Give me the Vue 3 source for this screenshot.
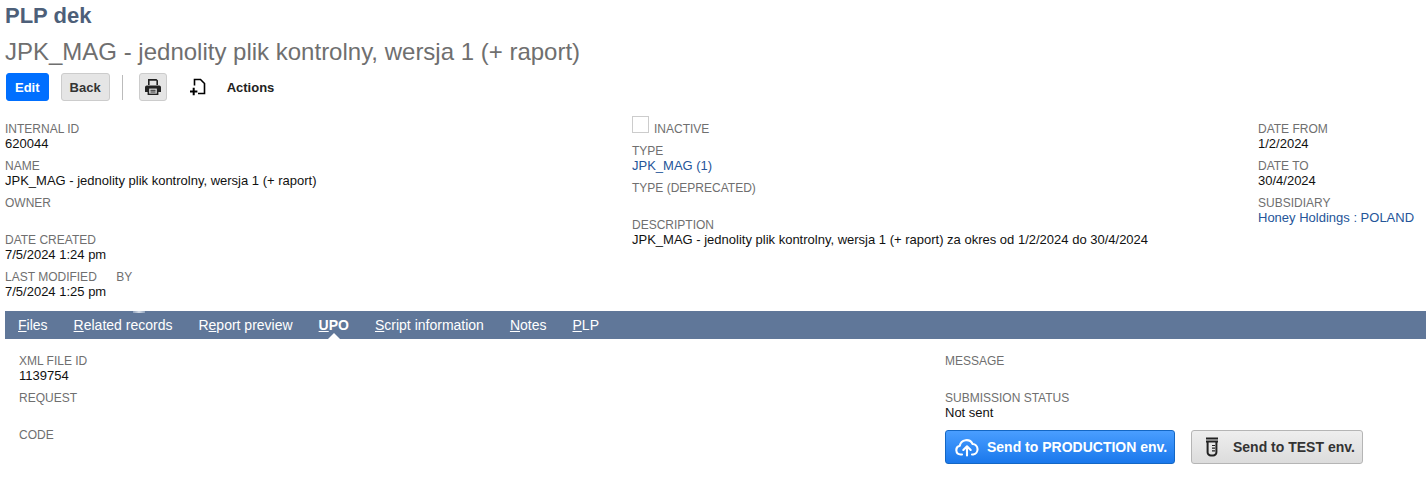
<script setup>
const col1 = [
  { label: 'Internal ID', value: '620044' },
  { label: 'Name', value: 'JPK_MAG - jednolity plik kontrolny, wersja 1 (+ raport)' },
  { label: 'Owner', value: '' },
  { label: 'Date created', value: '7/5/2024 1:24 pm' },
]
const col3 = [
  { label: 'Date from', value: '1/2/2024' },
  { label: 'Date to', value: '30/4/2024' },
  { label: 'Subsidiary', value: 'Honey Holdings : POLAND', link: true },
]
const tabs = [
  { key: 'F', rest: 'iles' },
  { key: 'R', rest: 'elated records' },
  { pre: 'R', key: 'e', rest: 'port preview' },
  { key: 'U', rest: 'PO', active: true },
  { key: 'S', rest: 'cript information' },
  { key: 'N', rest: 'otes' },
  { key: 'P', rest: 'LP' },
]
</script>

<template>
  <div class="page">
    <header class="head">
      <h1 class="kind">PLP dek</h1>
      <h2 class="title">JPK_MAG - jednolity plik kontrolny, wersja 1 (+ raport)</h2>
      <div class="toolbar">
        <button class="btn primary">Edit</button>
        <button class="btn">Back</button>
        <span class="sep"></span>
        <button class="btn icon" aria-label="Print">
          <svg width="18" height="18" viewBox="0 0 18 18">
            <path fill="#222" d="M4 1h8.5L14 2.5V7h-1.6V2.7H5.6V7H4zM2.8 7.5h12.4A1.8 1.8 0 0 1 17 9.3V14h-2.6v3H3.6v-3H1V9.3a1.8 1.8 0 0 1 1.8-1.8z"/>
            <path fill="#e5e5e5" d="M5.2 10.6h7.6v5H5.2z"/>
            <path fill="#222" d="M6.4 11.8h5.2v1H6.4zM6.4 13.6h5.2v1H6.4z"/>
          </svg>
        </button>
        <span class="newdoc">
          <svg width="18" height="18" viewBox="0 0 18 18" fill="none" stroke="#000" stroke-width="1.6">
            <path d="M5.5 7.5V1.5h6l4 4v10H9"/>
            <path d="M1 13.5h7.4M4.7 9.8v7.4" stroke-width="2"/>
          </svg>
        </span>
        <span class="actions">Actions</span>
      </div>
    </header>

    <section class="summary">
      <div class="column">
        <div v-for="f in col1" :key="f.label" class="field">
          <div class="label">{{ f.label }}</div>
          <div class="value">{{ f.value }}</div>
        </div>
        <div class="field">
          <div class="label">Last modified <span class="by">By</span></div>
          <div class="value">7/5/2024 1:25 pm</div>
        </div>
      </div>
      <div class="column">
        <div class="check-row">
          <span class="checkbox"></span>
          <span class="label check-label">Inactive</span>
        </div>
        <div class="field">
          <div class="label">Type</div>
          <div class="value link">JPK_MAG (1)</div>
        </div>
        <div class="field">
          <div class="label">Type (deprecated)</div>
          <div class="value"></div>
        </div>
        <div class="field">
          <div class="label">Description</div>
          <div class="value">JPK_MAG - jednolity plik kontrolny, wersja 1 (+ raport) za okres od 1/2/2024 do 30/4/2024</div>
        </div>
      </div>
      <div class="column">
        <div v-for="f in col3" :key="f.label" class="field">
          <div class="label">{{ f.label }}</div>
          <div class="value" :class="{ link: f.link }">{{ f.value }}</div>
        </div>
      </div>
    </section>

    <nav class="tabs">
      <a v-for="t in tabs" :key="t.key + t.rest" class="tab" :class="{ active: t.active }">{{ t.pre }}<u>{{ t.key }}</u>{{ t.rest }}</a>
    </nav>

    <section class="panel">
      <div class="panel-col">
        <div class="field">
          <div class="label">XML file ID</div>
          <div class="value">1139754</div>
        </div>
        <div class="field">
          <div class="label">Request</div>
          <div class="value"></div>
        </div>
        <div class="field">
          <div class="label">Code</div>
          <div class="value"></div>
        </div>
      </div>
      <div class="panel-col">
        <div class="field">
          <div class="label">Message</div>
          <div class="value"></div>
        </div>
        <div class="field">
          <div class="label">Submission status</div>
          <div class="value">Not sent</div>
        </div>
        <div class="send-row">
          <button class="send blue">
            <svg width="24" height="20" viewBox="0 0 24 20" fill="none" stroke="#fff" stroke-width="2.1" stroke-linecap="round" stroke-linejoin="round">
              <path d="M7 17.5H5.6a4.4 4.4 0 0 1-.8-8.7A6.8 6.8 0 0 1 17.6 7a5.3 5.3 0 0 1 .6 10.5H17"/>
              <path d="M12 18.5V9.5M8.3 13 12 9.3l3.7 3.7"/>
            </svg>
            <span>Send to PRODUCTION env.</span>
          </button>
          <button class="send gray">
            <svg width="14" height="20" viewBox="0 0 14 20" fill="none" stroke="#222" stroke-width="2" stroke-linejoin="round">
              <path d="M1 1.5h12M1 4.5h12" stroke-width="1.8"/>
              <path d="M2.6 5v10.2a3.3 3.3 0 0 0 3.3 3.3h2.2a3.3 3.3 0 0 0 3.3-3.3V5"/>
              <path d="M7 8.5h3M7 11.2h3M7 13.9h3" stroke-width="1.2"/>
            </svg>
            <span>Send to TEST env.</span>
          </button>
        </div>
      </div>
    </section>
  </div>
</template>

<style>
html, body { background: #fff; }
</style>

<style scoped>
.page {
  width: 1426px;
  height: 480px;
  overflow: hidden;
  font-family: "Liberation Sans", Arial, sans-serif;
  font-size: 13px;
  color: #111;
}
.head { padding: 0 5px; }
.kind {
  margin: 0;
  height: 31px;
  line-height: 32px;
  font-size: 22px;
  font-weight: 700;
  color: #4d5f79;
}
.title {
  margin: 0;
  height: 42px;
  line-height: 42px;
  font-size: 24px;
  font-weight: 400;
  color: #6f6f6f;
}
.toolbar {
  height: 28px;
  display: flex;
  align-items: center;
  padding-left: 1px;
}
.btn {
  height: 28px;
  padding: 0 8px;
  border: 1px solid #ccc;
  border-radius: 3px;
  background: #e5e5e5;
  font: 700 13px "Liberation Sans", Arial, sans-serif;
  color: #333;
  margin-right: 12px;
  display: inline-flex;
  align-items: center;
}
.btn.primary {
  background: #006fff;
  border-color: #006fff;
  color: #fff;
}
.btn.icon { width: 28px; padding: 0; justify-content: center; margin-right: 0; }
.sep {
  width: 1px;
  height: 25px;
  background: #bbb;
  margin: 0 16px 0 0;
}
.newdoc { display: flex; margin-left: 22px; }
.actions { margin-left: 20px; font-weight: 700; font-size: 13px; color: #222; }
.summary {
  display: grid;
  grid-template-columns: 627px 626px 1fr;
  padding: 21px 5px 0;
  height: 210px;
  box-sizing: border-box;
}
.column, .panel-col { display: flex; flex-direction: column; }
.field { height: 37px; }
.label {
  height: 14px;
  line-height: 14px;
  font-size: 12px;
  color: #6f6f6f;
  text-transform: uppercase;
}
.by { margin-left: 16px; }
.value {
  height: 15px;
  line-height: 15px;
  font-size: 13px;
  color: #111;
}
.link { color: #255599; }
.check-row {
  display: flex;
  align-items: flex-start;
  height: 20px;
  margin-top: -6px;
  margin-bottom: 8px;
  gap: 5px;
}
.check-label { margin-top: 6px; }
.checkbox {
  width: 17px;
  height: 17px;
  border: 1px solid #ccc;
  box-sizing: border-box;
  display: block;
}
.tabs {
  position: relative;
  margin-left: 5px;
  height: 28px;
  background: #607799;
  display: flex;
  align-items: center;
  padding-left: 13px;
  gap: 26px;
}
.tabs::before {
  content: "";
  position: absolute;
  left: 128px;
  top: 0;
  width: 12px;
  height: 2px;
  background: linear-gradient(90deg, #8fa1bb, #d5dce7 50%, #8fa1bb);
}
.tab {
  position: relative;
  font-size: 14px;
  color: #fff;
  line-height: 28px;
  height: 28px;
}
.tab.active { font-weight: 700; }
.tab.active::after {
  content: "";
  position: absolute;
  left: 50%;
  bottom: 0;
  margin-left: -6px;
  border: 6px solid transparent;
  border-top: 0;
  border-bottom-color: #fff;
}
.panel {
  display: grid;
  grid-template-columns: 926px 1fr;
  padding: 15px 0 0 19px;
}
.send-row { display: flex; gap: 16px; margin-top: 2px; }
.send {
  height: 34px;
  border-radius: 3px;
  display: inline-flex;
  align-items: center;
  font: 700 14px "Liberation Sans", Arial, sans-serif;
  padding: 0;
}
.send.blue {
  width: 230px;
  padding-left: 9px;
  gap: 8px;
  color: #fff;
  border: 1px solid #1467c4;
  background: linear-gradient(#4a9eff, #1a78ec);
}
.send.gray {
  width: 172px;
  padding-left: 13px;
  gap: 14px;
  color: #333;
  border: 1px solid #b5b5b5;
  background: linear-gradient(#eee, #dcdcdc);
}
</style>
